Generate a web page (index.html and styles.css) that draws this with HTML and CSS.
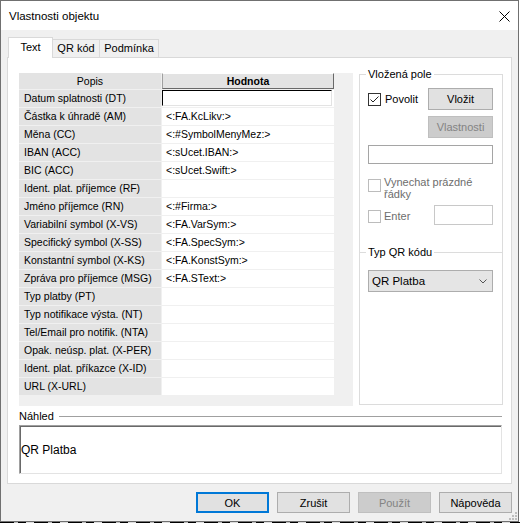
FILE: index.html
```html
<!DOCTYPE html>
<html>
<head>
<meta charset="utf-8">
<link rel="stylesheet" href="styles.css">
</head>
<body>
<div class="window">
  <div class="titlebar">
    <span class="title">Vlastnosti objektu</span>
    <svg class="close" width="11" height="11" viewBox="0 0 11 11"><path d="M0.5 0.5 L10.5 10.5 M10.5 0.5 L0.5 10.5" stroke="#000" stroke-width="1" fill="none"/></svg>
  </div>
  <div class="client">
    <div class="tabs">
      <div class="tab active">Text</div>
      <div class="tab qr">QR kód</div>
      <div class="tab podm">Podmínka</div>
    </div>
    <div class="page">
      <div class="top">
        <div class="grid-area">
          <div class="grid">
            <div class="hdr popis">Popis</div>
            <div class="hdr hodnota">Hodnota</div>
            <div class="lbl">Datum splatnosti (DT)</div><div class="val first"><div class="edit"></div></div>
            <div class="lbl">Částka k úhradě (AM)</div><div class="val">&lt;:FA.KcLikv:&gt;</div>
            <div class="lbl">Měna (CC)</div><div class="val">&lt;:#SymbolMenyMez:&gt;</div>
            <div class="lbl">IBAN (ACC)</div><div class="val">&lt;:sUcet.IBAN:&gt;</div>
            <div class="lbl">BIC (ACC)</div><div class="val">&lt;:sUcet.Swift:&gt;</div>
            <div class="lbl">Ident. plat. příjemce (RF)</div><div class="val"></div>
            <div class="lbl">Jméno příjemce (RN)</div><div class="val">&lt;:#Firma:&gt;</div>
            <div class="lbl">Variabilní symbol (X-VS)</div><div class="val">&lt;:FA.VarSym:&gt;</div>
            <div class="lbl">Specifický symbol (X-SS)</div><div class="val">&lt;:FA.SpecSym:&gt;</div>
            <div class="lbl">Konstantní symbol (X-KS)</div><div class="val">&lt;:FA.KonstSym:&gt;</div>
            <div class="lbl">Zpráva pro příjemce (MSG)</div><div class="val">&lt;:FA.SText:&gt;</div>
            <div class="lbl">Typ platby (PT)</div><div class="val"></div>
            <div class="lbl">Typ notifikace výsta. (NT)</div><div class="val"></div>
            <div class="lbl">Tel/Email pro notifik. (NTA)</div><div class="val"></div>
            <div class="lbl">Opak. neúsp. plat. (X-PER)</div><div class="val"></div>
            <div class="lbl">Ident. plat. příkazce (X-ID)</div><div class="val"></div>
            <div class="lbl">URL (X-URL)</div><div class="val"></div>
          </div>
        </div>
        <fieldset class="group">
          <legend>Vložená pole</legend>
          <div class="row1">
            <div class="chk"><span class="box"><svg width="11" height="11" viewBox="0 0 11 11"><path d="M1.5 5.5 L4 8 L9.5 2.5" stroke="#222" stroke-width="1" fill="none"/></svg></span><span>Povolit</span></div>
            <div class="btn">Vložit</div>
          </div>
          <div class="btn disabled vl">Vlastnosti</div>
          <div class="field"></div>
          <div class="chk dis skip"><span class="box"></span><span>Vynechat prázdné<br>řádky</span></div>
          <div class="enter-row">
            <div class="chk dis enter"><span class="box"></span><span>Enter</span></div>
            <div class="field small"></div>
          </div>
          <div class="sep"><span>Typ QR kódu</span></div>
          <div class="combo"><span>QR Platba</span><svg width="8" height="5" viewBox="0 0 8 5"><path d="M0.5 0.5 L4 4 L7.5 0.5" stroke="#555" stroke-width="1" fill="none"/></svg></div>
        </fieldset>
      </div>
      <div class="nahled"><span>Náhled</span></div>
      <div class="preview">QR Platba</div>
    </div>
    <div class="buttons">
      <div class="btn wide default">OK</div>
      <div class="btn wide">Zrušit</div>
      <div class="btn wide disabled">Použít</div>
      <div class="btn wide">Nápověda</div>
    </div>
  </div>
  <svg class="grip" width="8" height="8" viewBox="0 0 8 8">
    <rect x="6" y="0" width="2" height="2" fill="#bdbdbd"/>
    <rect x="3" y="3" width="2" height="2" fill="#bdbdbd"/>
    <rect x="6" y="3" width="2" height="2" fill="#bdbdbd"/>
    <rect x="0" y="6" width="2" height="2" fill="#bdbdbd"/>
    <rect x="3" y="6" width="2" height="2" fill="#bdbdbd"/>
    <rect x="6" y="6" width="2" height="2" fill="#bdbdbd"/>
  </svg>
</div>
<div class="strip"></div>
</body>
</html>
```

FILE: styles.css
```css
* { box-sizing: border-box; }

body {
  margin: 0;
  width: 520px;
  height: 523px;
  overflow: hidden;
  background: #ffffff;
  font-family: "Liberation Sans", Arial, sans-serif;
  font-size: 11px;
  color: #000;
}

.window {
  position: relative;
  width: 519px;
  height: 522px;
  border: 1px solid #707070;
  background: #f0f0f0;
  display: flex;
  flex-direction: column;
}

.titlebar {
  flex: none;
  height: 29px;
  background: #fff;
  display: flex;
  align-items: center;
  justify-content: space-between;
  padding: 0 8px 0 8px;
}

.title { font-size: 11.5px; }

.close { display: block; margin-top: 1px; }

.client {
  flex: 1;
  display: flex;
  flex-direction: column;
}

.tabs {
  display: flex;
  align-items: flex-end;
  height: 28px;
  padding: 7px 0 0 7px;
}

.tab {
  height: 19px;
  border: 1px solid #d9d9d9;
  border-bottom: none;
  background: #f0f0f0;
  line-height: 17px;
  text-align: center;
  margin-left: -1px;
}

.tab.active {
  width: 45px;
  height: 21px;
  margin-left: 0;
  background: #fff;
  position: relative;
  z-index: 1;
  line-height: 18px;
}

.tab.qr { width: 48px; }
.tab.podm { width: 60px; }

.page {
  margin: -1px 0 0 6px;
  width: 505px;
  height: 427px;
  border: 1px solid #d9d9d9;
  background: #fff;
  padding: 9px 0 0 11px;
}

.top {
  display: flex;
  align-items: flex-start;
  gap: 6px;
}

.grid-area {
  margin-top: 6px;
  width: 334px;
  height: 333px;
  background: #f0f0f0;
}

.grid {
  display: grid;
  width: 315px;
  grid-template-columns: 142px 172px;
  column-gap: 1px;
  grid-template-rows: 16px;
  grid-auto-rows: 17px;
  row-gap: 1px;
}

.hdr {
  background: #e3e3e3;
  text-align: center;
  font-size: 10.5px;
  line-height: 16px;
}

.hdr.hodnota {
  border: 1px solid;
  border-color: #ffffff #696969 #696969 #a0a0a0;
  font-weight: bold;
  line-height: 14px;
}

.lbl {
  background: #e3e3e3;
  padding-left: 5px;
  font-size: 10.5px;
  line-height: 17px;
  white-space: nowrap;
  overflow: hidden;
}

.val {
  background: #fff;
  padding-left: 4px;
  font-size: 10.5px;
  line-height: 17px;
  white-space: nowrap;
}

.val.first { padding: 0; }

.edit {
  width: 170px;
  height: 16px;
  border-top: 1px solid #000;
  border-left: 1px solid #000;
  border-right: 1px solid #e3e3e3;
  border-bottom: 1px solid #e3e3e3;
  background: #fff;
}

.group {
  margin: 0;
  min-width: 0;
  width: 144px;
  height: 338px;
  border: 1px solid #dcdcdc;
  padding: 7px 9px 0 8px;
}

.group legend {
  padding: 0 2px;
  margin-left: -2px;
  line-height: 14px;
}

.row1 {
  display: flex;
  align-items: center;
  justify-content: space-between;
  height: 22px;
}

.chk {
  display: flex;
  align-items: center;
  gap: 4px;
}

.box {
  display: block;
  flex: none;
  width: 13px;
  height: 13px;
  border: 1px solid #333;
  background: #fff;
}

.box svg { display: block; }

.btn {
  width: 65px;
  height: 22px;
  border: 1px solid #adadad;
  background: #e1e1e1;
  display: flex;
  align-items: center;
  justify-content: center;
}

.btn.disabled {
  background: #cccccc;
  border-color: #bfbfbf;
  color: #838383;
}

.vl { margin: 6px 0 0 auto; }

.field {
  margin-top: 7px;
  height: 19px;
  border: 1px solid #a5a5a5;
  background: #fff;
}

.dis { color: #6d6d6d; }
.dis .box { border-color: #bcbcbc; }

.skip {
  margin-top: 12px;
  align-items: flex-start;
  gap: 3px;
  line-height: 12px;
}

.skip .box { margin-top: 3px; }

.enter-row {
  margin-top: 5px;
  height: 20px;
  display: flex;
  justify-content: space-between;
}

.enter {
  align-items: flex-start;
  gap: 3px;
  padding-top: 5px;
  line-height: 13px;
}

.field.small {
  margin: 0;
  width: 59px;
  height: 20px;
  border-color: #c8c8c8;
}

.sep {
  margin: 20px -9px 0 -8px;
  height: 14px;
  display: flex;
  align-items: center;
}

.sep::before {
  content: "";
  width: 6px;
  border-top: 1px solid #dcdcdc;
}

.sep span { padding: 0 2px; }

.sep::after {
  content: "";
  flex: 1;
  border-top: 1px solid #dcdcdc;
}

.combo {
  margin-top: 11px;
  height: 22px;
  border: 1px solid #adadad;
  background: #e5e5e5;
  display: flex;
  align-items: center;
  justify-content: space-between;
  padding: 0 5px 0 3px;
  font-size: 11.5px;
}

.combo svg { display: block; }

.nahled {
  margin-top: 3px;
  width: 483px;
  height: 14px;
  display: flex;
  align-items: center;
}

.nahled::after {
  content: "";
  flex: 1;
  margin-left: 5px;
  border-top: 1px solid #a0a0a0;
}

.preview {
  margin-top: 2px;
  width: 483px;
  height: 49px;
  border: 1px solid;
  border-color: #a0a0a0 #e3e3e3 #e3e3e3 #a0a0a0;
  box-shadow: inset 1px 1px 0 #696969;
  padding-left: 1px;
  display: flex;
  align-items: center;
  font-size: 12px;
}

.buttons {
  display: flex;
  justify-content: flex-end;
  gap: 8px;
  margin-top: 8px;
  padding-right: 6px;
}

.btn.wide {
  width: 73px;
  height: 21px;
}

.btn.default { border: 2px solid #0078d7; }

.grip {
  position: absolute;
  right: 1px;
  bottom: 1px;
  display: block;
}

.strip {
  height: 1px;
  width: 520px;
  background: repeating-linear-gradient(90deg, #000 0 14px, #bbb 14px 18px, #000 18px 26px, #ddd 26px 34px);
}
```
